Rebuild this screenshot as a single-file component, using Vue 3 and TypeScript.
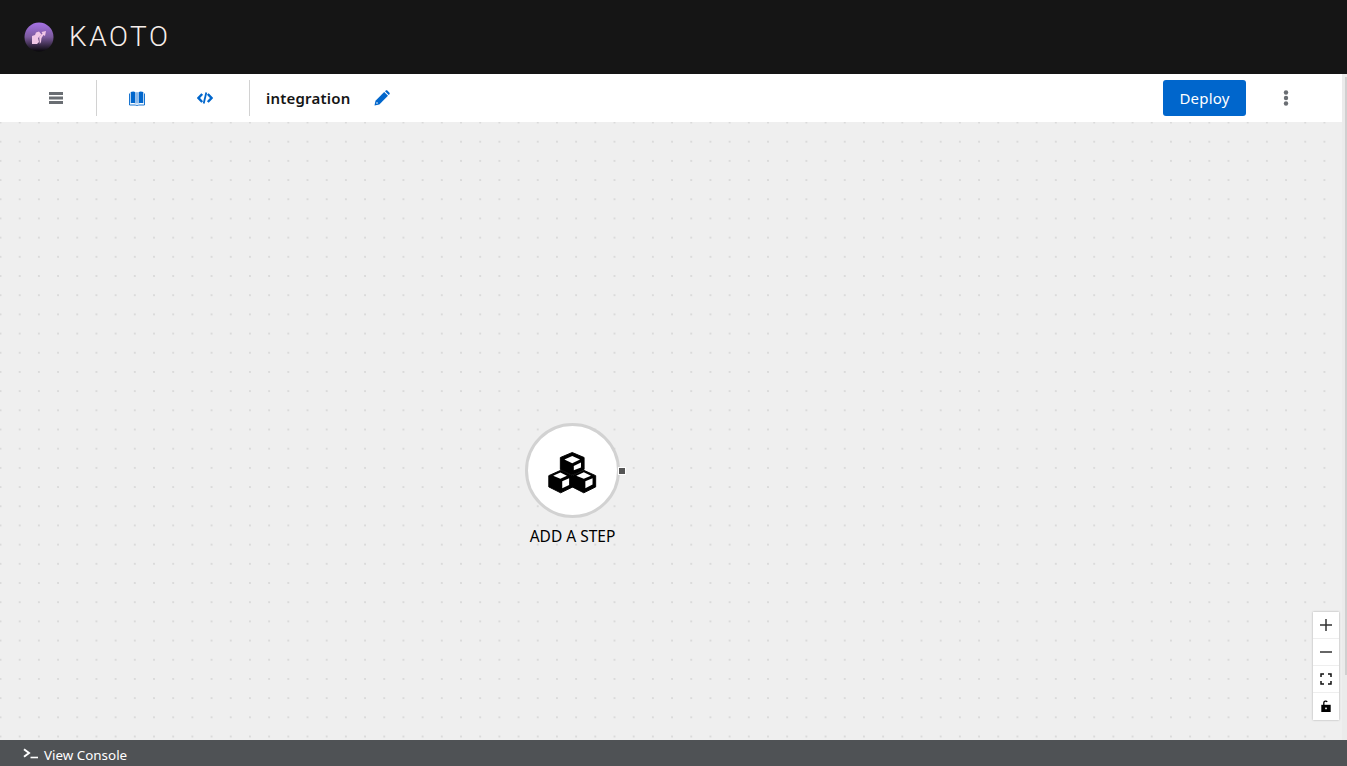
<script setup lang="ts">
const projectName: string = 'integration'
const stepLabel: string = 'ADD A STEP'
</script>

<template>
  <div class="page">
    <header class="masthead">
      <svg class="logo" width="32" height="32" viewBox="0 0 32 32">
        <defs>
          <linearGradient id="orb" x1="0" y1="0" x2="0" y2="1">
            <stop offset="0" stop-color="#a672e6" />
            <stop offset="0.5" stop-color="#7b5a9c" />
            <stop offset="1" stop-color="#08070a" />
          </linearGradient>
        </defs>
        <circle cx="16" cy="16" r="14.500" fill="url(#orb)" />
        <path d="M9 15l3-1 1-2.500 3-1 2.500 3-3.500 3.500 1 4-2 2H9z" fill="#f0c6e6" />
        <path d="M16.200 15.800l3.300-3.300-1-1.500 4.500-1-1 5-1.500-1-2 3-.5 4-1.200 2z" fill="#f0c6e6" />
      </svg>
      <span class="brand">KAOTO</span>
    </header>

    <nav class="toolbar">
      <button class="tool menu" aria-label="Menu">
        <svg width="14" height="14" viewBox="0 0 14 14"><path d="M0 1h14v3H0zM0 5.500h14v3H0zM0 10h14v3H0z" fill="#6a6e73" /></svg>
      </button>
      <span class="divider"></span>
      <button class="tool book" aria-label="Catalog">
        <svg width="16" height="15" viewBox="0 0 16 15"><path d="M1.700 1C3.500.3 5.500.3 6.300 1.200v11.300c-1-.6-3-.6-4.600-.2zM14.300 1c-1.800-.7-3.800-.7-4.600.2v11.300c1-.6 3-.6 4.600-.2z" fill="#06c" /><path d="M6.300 1.200h3.400v11.300H6.300z" fill="#8db9e8" /><path d="M.5 2.500v11.500h5.700c.4.500 3.200.5 3.600 0h5.700V2.500" fill="none" stroke="#06c" stroke-width=".9" /></svg>
      </button>
      <button class="tool code" aria-label="Source code">
        <svg width="16" height="14" viewBox="0 0 16 14"><path d="M5.200 3L1.500 7l3.700 4M10.800 3l3.700 4-3.700 4" fill="none" stroke="#06c" stroke-width="2.400" /><path d="M9.300 1.500L6.700 12.500" fill="none" stroke="#06c" stroke-width="1.800" /></svg>
      </button>
      <span class="divider"></span>
      <span class="name">{{ projectName }}</span>
      <button class="tool pencil" aria-label="Rename">
        <svg width="16" height="16" viewBox="0 0 16 16"><path d="M.5 15.500l1-4.800L10.200 2l3.800 3.800-8.700 8.700z" fill="#06c" /><path d="M11 1.300l.8-.8c.5-.4 1.100-.4 1.500 0l2.200 2.200c.4.400.4 1 0 1.500l-.8.800z" fill="#06c" /><circle cx="3" cy="13" r=".8" fill="#fff" /></svg>
      </button>
      <span class="spacer"></span>
      <button class="deploy">Deploy</button>
      <button class="tool kebab" aria-label="More">
        <svg width="6" height="16" viewBox="0 0 6 16"><circle cx="3" cy="2.500" r="2.200" fill="#6a6e73" /><circle cx="3" cy="8" r="2.200" fill="#6a6e73" /><circle cx="3" cy="13.500" r="2.200" fill="#6a6e73" /></svg>
      </button>
    </nav>

    <main class="canvas">
      <div class="node">
        <div class="circle">
          <svg class="cubes" width="52" height="45" viewBox="0 0 165 144">
            <path d="M80 8l38 16v38L80 80 42 62V24z" fill="#000" stroke="#000" stroke-width="3" stroke-linejoin="round" />
            <path d="M43 65l39 17v36l-39 19-38-19V82z" fill="#000" stroke="#000" stroke-width="3" stroke-linejoin="round" />
            <path d="M117 65l38 17v36l-38 19-37-19V82z" fill="#000" stroke="#000" stroke-width="3" stroke-linejoin="round" />
            <path d="M55 30l25-11 25 11-25 12z" fill="#fff" />
            <path d="M85 51l23-11v16l-23 9z" fill="#fff" />
            <path d="M19 82l23-10 21 10-21 10z" fill="#fff" />
            <path d="M48 100l22-10v22l-22 10z" fill="#fff" />
            <path d="M93 82l24-11 23 11-23 10z" fill="#fff" />
            <path d="M122 100l23-10v20l-23 12z" fill="#fff" />
          </svg>
        </div>
        <span class="port"></span>
        <span class="label">{{ stepLabel }}</span>
      </div>

      <div class="zoom">
        <button aria-label="Zoom in">
          <svg width="12" height="12" viewBox="0 0 12 12"><path d="M6 0v12M0 6h12" stroke="#333" stroke-width="1.500" /></svg>
        </button>
        <button aria-label="Zoom out">
          <svg width="12" height="12" viewBox="0 0 12 12"><path d="M0 6h12" stroke="#333" stroke-width="1.500" /></svg>
        </button>
        <button aria-label="Fit view">
          <svg width="12" height="12" viewBox="0 0 12 12"><path d="M1 4V1h3M8 1h3v3M11 8v3H8M4 11H1V8" fill="none" stroke="#111" stroke-width="1.500" /></svg>
        </button>
        <button aria-label="Lock">
          <svg width="12" height="13" viewBox="0 0 12 13"><path d="M3.800 5V2.800c0-1.600 2.400-2.400 3.400-1" fill="none" stroke="#000" stroke-width="1.300" /><path d="M1.300 4.800h9.400v7.200H1.300z" fill="#000" /><rect x="5.200" y="7.600" width="1.600" height="1.600" fill="#fff" /></svg>
        </button>
      </div>
    </main>

    <footer class="console">
      <svg width="16" height="12" viewBox="0 0 16 12"><path d="M1 1.200L6 5 1 8.800" fill="none" stroke="#fff" stroke-width="2" /><path d="M7.500 9.500H15" stroke="#fff" stroke-width="1.600" /></svg>
      <span>View Console</span>
    </footer>

    <div class="scrollbar"><div class="thumb"></div></div>
  </div>
</template>

<style>
body { margin: 0; overflow: hidden; }
</style>

<style scoped>
.page {
  position: relative;
  width: 1347px;
  height: 766px;
  display: flex;
  flex-direction: column;
  font-family: "Noto Sans", "Liberation Sans", sans-serif;
  background: #efefef;
  overflow: hidden;
}
.masthead {
  height: 74px;
  flex: none;
  background: #151515;
  display: flex;
  align-items: center;
  padding-left: 23px;
  gap: 14px;
}
.logo { flex: none; }
.brand {
  color: #f6eeea;
  font-family: "Roboto", sans-serif;
  font-size: 28px;
  font-weight: 300;
  letter-spacing: 2.500px;
  margin-top: -2px;
}
.toolbar {
  height: 48px;
  width: 1342px;
  flex: none;
  background: #fff;
  display: flex;
  align-items: center;
  position: relative;
  z-index: 1;
}
button { border: 0; background: none; padding: 0; font: inherit; display: flex; align-items: center; justify-content: center; }
.tool { height: 36px; }
.menu { width: 96px; padding-left: 16px; }
.divider { width: 1px; height: 36px; background: #d2d2d2; flex: none; }
.book { width: 80px; }
.code { width: 56px; margin-right: 16px; }
.name {
  margin-left: 16px;
  font-size: 15px;
  font-weight: 600;
  letter-spacing: 0.200px;
  color: #151515;
}
.pencil { width: 16px; margin-left: 24px; }
.spacer { flex: 1; }
.deploy {
  width: 83px;
  height: 36px;
  background: #06c;
  color: #fff;
  border-radius: 3px;
  font-size: 15px;
  letter-spacing: 0.200px;
}
.kebab { width: 80px; margin-right: 16px; }
.canvas {
  flex: 1;
  position: relative;
  background-color: #efefef;
  background-image: radial-gradient(circle, #c9c9c9 0.5px, transparent 0.9px);
  background-size: 19.200px 19.200px;
  background-position: -9.100px -9.100px;
}
.node {
  position: absolute;
  left: 525px;
  top: 301px;
  width: 95px;
  display: flex;
  flex-direction: column;
  align-items: center;
}
.circle {
  width: 95px;
  height: 95px;
  box-sizing: border-box;
  flex: none;
  border: 3px solid #d2d2d2;
  border-radius: 50%;
  background: #fff;
  display: flex;
  align-items: center;
  justify-content: center;
}
.cubes { margin-top: 4px; }
.port {
  position: absolute;
  left: 93px;
  top: 44px;
  width: 6px;
  height: 6px;
  background: #555;
  border: 0.500px solid #fff;
}
.label {
  margin-top: 7px;
  white-space: nowrap;
  font-size: 15.500px;
  letter-spacing: 0;
  color: #000;
}
.zoom {
  position: absolute;
  right: 8px;
  bottom: 20px;
  width: 26px;
  display: flex;
  flex-direction: column;
  background: #fff;
  box-shadow: 0 0 2px rgba(0, 0, 0, 0.3);
}
.zoom button {
  height: 27px;
  border-bottom: 1px solid #eee;
  box-sizing: border-box;
}
.zoom button:last-child { border-bottom: 0; }
.console {
  height: 26px;
  flex: none;
  background: #4f5255;
  display: flex;
  align-items: center;
  padding-left: 23px;
  gap: 5px;
  color: #fff;
  font-size: 13.400px;
  position: relative;
  z-index: 2;
}
.console span { margin-top: 4px; }
.console svg { margin-top: 2px; }
.scrollbar {
  position: absolute;
  top: 74px;
  right: 0;
  bottom: 0;
  width: 5px;
  background: #ebebeb;
}
.thumb {
  margin: 3px 0 0 3px;
  width: 2px;
  height: 598px;
  background: #d0d0d0;
}
</style>
